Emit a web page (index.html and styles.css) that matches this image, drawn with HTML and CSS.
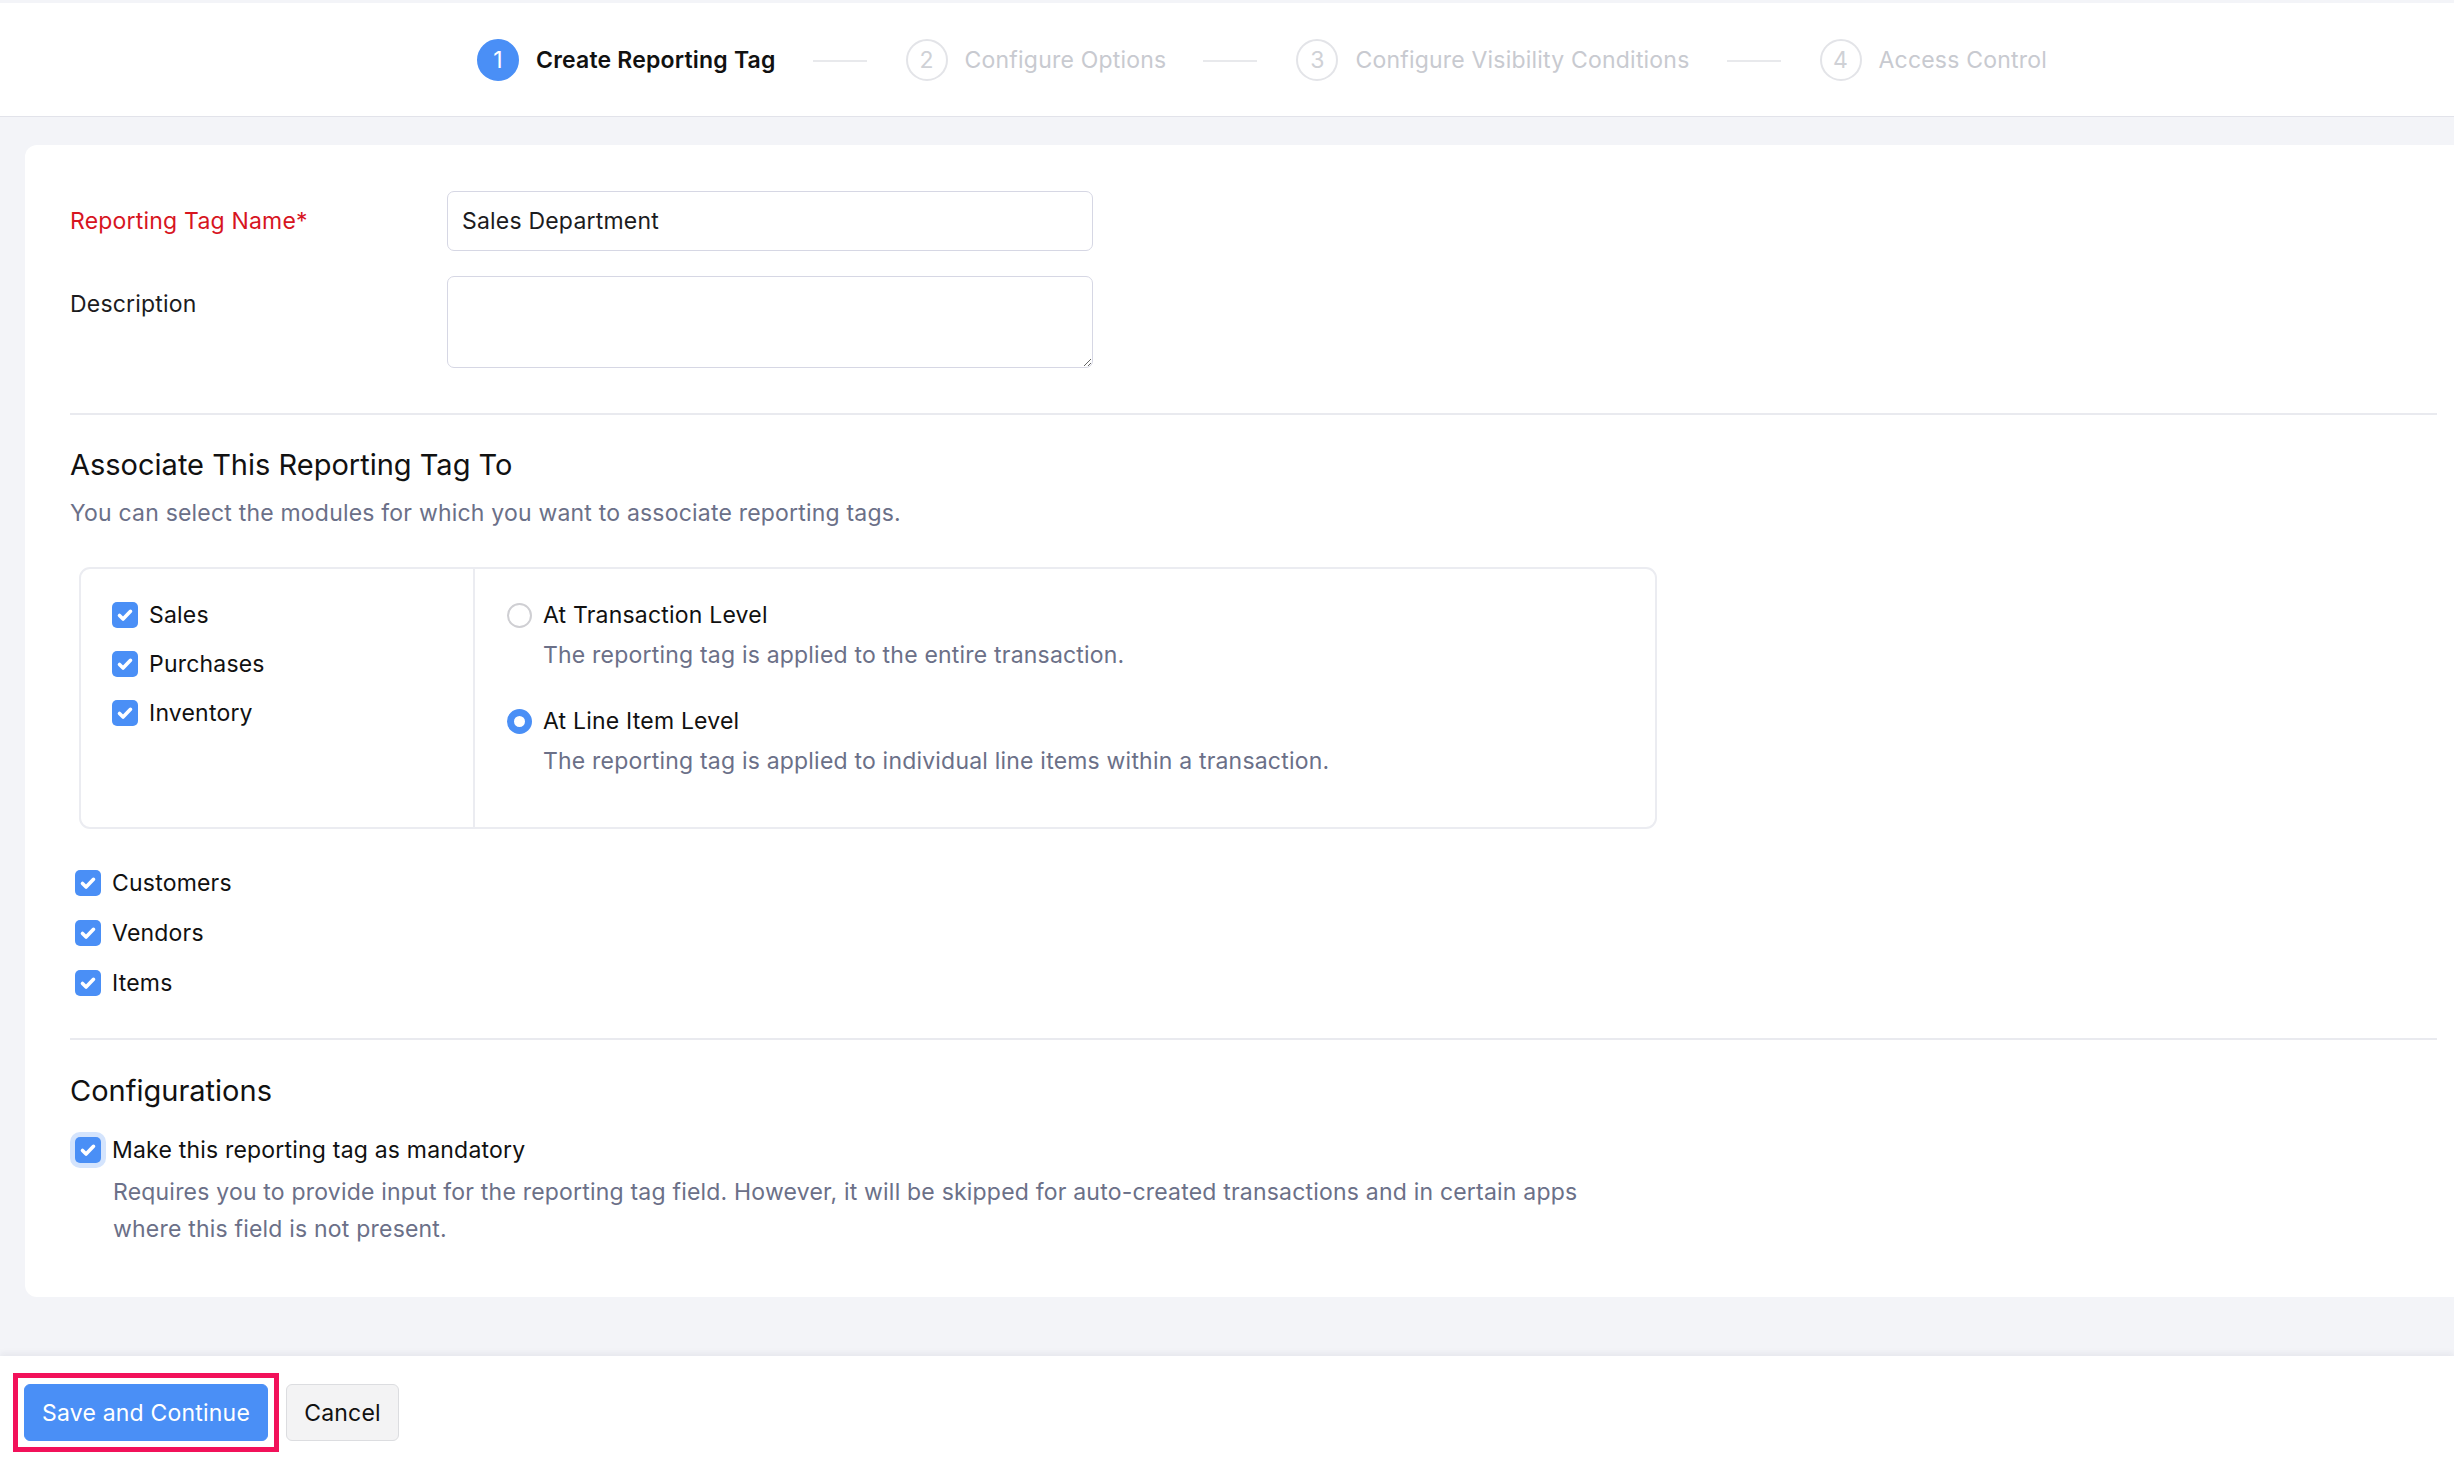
FILE: index.html
```html
<!DOCTYPE html>
<html lang="en">
<head>
<meta charset="utf-8">
<title>Create Reporting Tag</title>
<link rel="stylesheet" href="styles.css">
</head>
<body>
<div class="page">
  <header class="topbar">
    <ol class="stepper">
      <li class="step active"><span class="num">1</span><span class="step-label">Create Reporting Tag</span></li>
      <li class="sep"></li>
      <li class="step"><span class="num">2</span><span class="step-label">Configure Options</span></li>
      <li class="sep"></li>
      <li class="step"><span class="num">3</span><span class="step-label">Configure Visibility Conditions</span></li>
      <li class="sep"></li>
      <li class="step"><span class="num">4</span><span class="step-label">Access Control</span></li>
    </ol>
  </header>

  <main class="content">
    <section class="card">
      <div class="field-row">
        <label class="field-label required">Reporting Tag Name*</label>
        <input class="text-input" type="text" value="Sales Department">
      </div>
      <div class="field-row top">
        <label class="field-label desc-label">Description</label>
        <textarea class="text-area"></textarea>
      </div>

      <hr class="divider first">

      <h2 class="section-title">Associate This Reporting Tag To</h2>
      <p class="section-sub">You can select the modules for which you want to associate reporting tags.</p>

      <div class="module-box">
        <div class="module-list">
          <div class="check-row"><span class="cb"><svg viewBox="0 0 16 16"><path d="M4 8.3l2.6 2.6L12 5.3"/></svg></span>Sales</div>
          <div class="check-row"><span class="cb"><svg viewBox="0 0 16 16"><path d="M4 8.3l2.6 2.6L12 5.3"/></svg></span>Purchases</div>
          <div class="check-row"><span class="cb"><svg viewBox="0 0 16 16"><path d="M4 8.3l2.6 2.6L12 5.3"/></svg></span>Inventory</div>
        </div>
        <div class="level-list">
          <div class="radio-row"><span class="radio"></span>At Transaction Level</div>
          <p class="radio-desc">The reporting tag is applied to the entire transaction.</p>
          <div class="radio-row second"><span class="radio on"></span>At Line Item Level</div>
          <p class="radio-desc">The reporting tag is applied to individual line items within a transaction.</p>
        </div>
      </div>

      <div class="entity-list">
        <div class="check-row"><span class="cb"><svg viewBox="0 0 16 16"><path d="M4 8.3l2.6 2.6L12 5.3"/></svg></span>Customers</div>
        <div class="check-row"><span class="cb"><svg viewBox="0 0 16 16"><path d="M4 8.3l2.6 2.6L12 5.3"/></svg></span>Vendors</div>
        <div class="check-row"><span class="cb"><svg viewBox="0 0 16 16"><path d="M4 8.3l2.6 2.6L12 5.3"/></svg></span>Items</div>
      </div>

      <hr class="divider second">

      <h2 class="section-title config">Configurations</h2>
      <div class="check-row focus-row"><span class="cb focused"><svg viewBox="0 0 16 16"><path d="M4 8.3l2.6 2.6L12 5.3"/></svg></span>Make this reporting tag as mandatory</div>
      <p class="config-desc">Requires you to provide input for the reporting tag field. However, it will be skipped for auto-created transactions and in certain apps where this field is not present.</p>
    </section>
  </main>

  <footer class="footer">
    <span class="highlight"><button class="btn primary">Save and Continue</button></span>
    <button class="btn secondary">Cancel</button>
  </footer>
</div>
</body>
</html>
```

FILE: styles.css
```css
* { box-sizing: border-box; }

html, body {
  margin: 0;
  padding: 0;
  background: #f3f4f8;
  font-family: Inter, "Noto Sans", sans-serif;
  color: #1c1c1e;
  font-size: 23px;
  letter-spacing: 0.2px;
}

.page {
  width: 2454px;
  height: 1460px;
  display: flex;
  flex-direction: column;
  padding-top: 3px;
  overflow: hidden;
}

/* ---------- top stepper ---------- */
.topbar {
  background: #fff;
  height: 114px;
  border-bottom: 1px solid #e2e3ea;
  display: flex;
  align-items: center;
  flex-shrink: 0;
}

.stepper {
  list-style: none;
  margin: 0;
  padding: 0 0 0 477px;
  display: flex;
  align-items: center;
}

.step {
  display: flex;
  align-items: center;
  gap: 17px;
  color: #c8cad0;
}

.step .num {
  width: 42px;
  height: 42px;
  border-radius: 50%;
  border: 2px solid #e3e4e8;
  display: flex;
  align-items: center;
  justify-content: center;
  font-size: 23px;
  color: #cfd1d6;
}

.step.active { color: #111; font-weight: 600; }
.step.active .num {
  background: #4a8ff6;
  border-color: #4a8ff6;
  color: #fff;
  font-weight: 400;
}

.sep {
  width: 54px;
  height: 2px;
  background: #e8e9ec;
  margin: 2px 39px 0 37px;
}

/* ---------- content ---------- */
.content {
  padding: 28px 0 0 25px;
  flex-shrink: 0;
}

.card {
  background: #fff;
  border-radius: 12px 0 0 12px;
  padding: 46px 17px 48px 45px;
  height: 1152px;
}

.field-row {
  display: flex;
  align-items: center;
}
.field-row.top {
  align-items: flex-start;
  margin-top: 25px;
}

.field-label {
  width: 377px;
  flex-shrink: 0;
  line-height: 30px;
}
.field-label.required { color: #d7151f; }
.desc-label { padding-top: 13px; }

.text-input, .text-area {
  width: 646px;
  border: 1px solid #d6d7e4;
  border-radius: 7px;
  font-family: inherit;
  font-size: 23px;
  letter-spacing: 0.2px;
  color: #1c1c1e;
  padding: 0 14px;
  outline: none;
  background: #fff;
}
.text-input { height: 60px; }
.text-area { height: 92px; display: block; resize: vertical; }

.divider {
  border: 0;
  border-top: 2px solid #e9eaef;
  margin: 0;
}
.divider.first { margin-top: 45px; }
.divider.second { margin-top: 40px; }

.section-title {
  font-weight: 400;
  font-size: 29px;
  letter-spacing: 0;
  line-height: 36px;
  margin: 32px 0 0;
  color: #111;
}
.section-title.config { margin-top: 33px; }

.section-sub {
  margin: 15px 0 0;
  line-height: 30px;
  color: #6b7088;
}

/* ---------- module box ---------- */
.module-box {
  margin: 39px 0 0 9px;
  width: 1578px;
  height: 262px;
  border: 2px solid #ebecf1;
  border-radius: 11px;
  display: flex;
}

.module-list {
  width: 394px;
  border-right: 2px solid #ebecf1;
  padding: 31px 0 0 31px;
  display: flex;
  flex-direction: column;
  gap: 19px;
}

.check-row {
  display: flex;
  align-items: center;
  gap: 11px;
  height: 30px;
  line-height: 30px;
  color: #111;
}

.cb {
  width: 26px;
  height: 26px;
  border-radius: 5px;
  background: #4a8ff6;
  display: inline-flex;
  align-items: center;
  justify-content: center;
  flex-shrink: 0;
}
.cb svg { width: 22px; height: 22px; }
.cb svg path {
  fill: none;
  stroke: #fff;
  stroke-width: 2.6;
  stroke-linecap: round;
  stroke-linejoin: round;
}

.level-list {
  padding: 31px 0 0 32px;
}

.radio-row {
  display: flex;
  align-items: center;
  gap: 11px;
  height: 30px;
  color: #111;
}
.radio-row.second { margin-top: 36px; }

.radio {
  width: 25px;
  height: 25px;
  border-radius: 50%;
  border: 2px solid #cfcfd3;
  flex-shrink: 0;
  background: #fff;
}
.radio.on {
  border: 7px solid #4a8ff6;
}

.radio-desc {
  margin: 10px 0 0 36px;
  line-height: 30px;
  color: #6b7088;
}

/* ---------- entity list ---------- */
.entity-list {
  margin: 39px 0 0 5px;
  display: flex;
  flex-direction: column;
  gap: 20px;
}

/* ---------- configuration ---------- */
.focus-row {
  margin: 26px 0 0 5px;
}
.cb.focused {
  box-shadow: 0 0 0 5px #d4e4fd;
}

.config-desc {
  margin: 9px 0 0 43px;
  width: 1500px;
  line-height: 37px;
  color: #6b7088;
}

/* ---------- footer ---------- */
.footer {
  margin-top: 59px;
  flex: 1;
  background: #fff;
  box-shadow: 0 -3px 6px rgba(30, 30, 60, 0.06);
  display: flex;
  align-items: flex-start;
  padding: 17px 0 0 13px;
}

.highlight {
  display: inline-flex;
  border: 5px solid #f2115a;
  padding: 6px;
}

.btn {
  height: 57px;
  border-radius: 6px;
  font-family: inherit;
  font-size: 23px;
  letter-spacing: 0.2px;
  padding: 0 10px;
  cursor: pointer;
}
.btn.primary {
  width: 244px;
  background: #4a8ff6;
  border: 1px solid #4a8ff6;
  color: #fff;
}
.btn.secondary {
  margin: 11px 0 0 7px;
  width: 113px;
  background: #f3f3f4;
  border: 1px solid #dcdde0;
  color: #111;
}
```
